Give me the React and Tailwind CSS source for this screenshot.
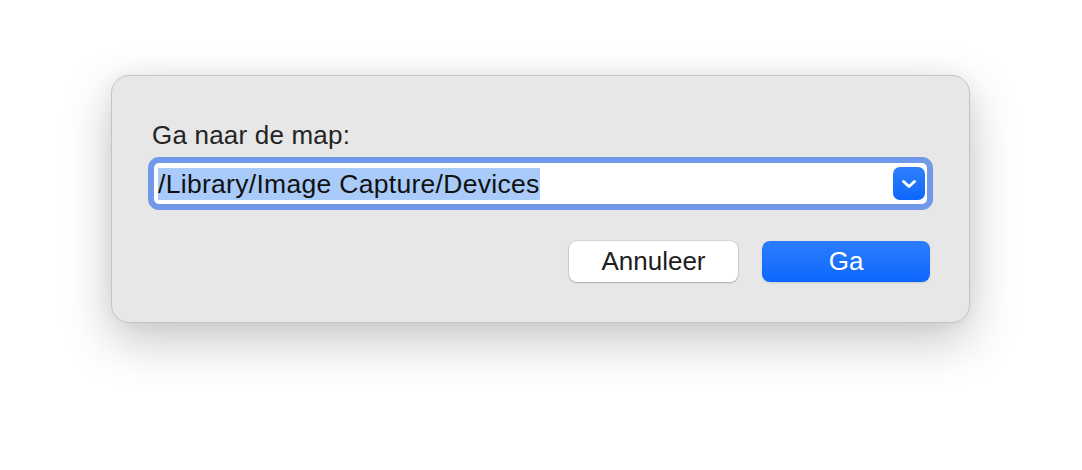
import React from "react";

const font = { fontFamily: '"Liberation Sans", Arial, sans-serif' };

const Chevron = () => (
    <svg width="16" height="10" viewBox="0 0 16 10" fill="none">
        <path d="M2.5 2.5l5.5 5 5.5-5" stroke="white" strokeWidth="3" strokeLinecap="round" strokeLinejoin="round" />
    </svg>
);

const App = () => {
    return (
        <div className="min-h-[470px] w-full bg-white pt-[75px] pl-[111px]" style={font}>
            {/* Dialog */}
            <div className="w-[859px] h-[248px] rounded-[18px] bg-[#e7e7e7] border border-[#c4c4c4] shadow-[0_18px_50px_rgba(0,0,0,0.22),0_0_20px_rgba(0,0,0,0.05)] pt-[44px] pl-[42px] pr-[39px] flex flex-col">
                <label className="text-[26px] leading-[30px] text-[#242424] tracking-[0.2px] -ml-[2px]">Ga naar de map:</label>

                {/* Path field */}
                <div className="mt-[13px] mr-[3px] h-[41px] bg-white rounded-[5px] shadow-[0_0_0_6px_#7099e9] flex items-center pl-[4px] pr-[2px]">
                    <div className="flex-1 flex items-center">
                        <span className="bg-[#a9cbf9] text-[#111] text-[26.5px] leading-[32px] tracking-[0.3px]">/Library/Image Capture/Devices</span>
                    </div>
                    <button className="w-[32px] h-[33px] rounded-[7px] bg-gradient-to-b from-[#2d7ffb] to-[#0b67fe] flex items-center justify-center">
                        <Chevron />
                    </button>
                </div>

                {/* Buttons */}
                <div className="mt-[37px] flex justify-end gap-[24px]">
                    <button className="w-[169px] h-[41px] rounded-[8px] bg-white text-[#1e1e1e] text-[26px] shadow-[0_0_0_0.5px_rgba(0,0,0,0.15),0_1px_2px_rgba(0,0,0,0.2)]">
                        Annuleer
                    </button>
                    <button className="w-[168px] h-[41px] rounded-[8px] bg-gradient-to-b from-[#2b7dfb] to-[#0c67fe] text-white text-[26px] shadow-[0_1px_2px_rgba(0,0,0,0.12)]">
                        Ga
                    </button>
                </div>
            </div>
        </div>
    );
};

export default App;
